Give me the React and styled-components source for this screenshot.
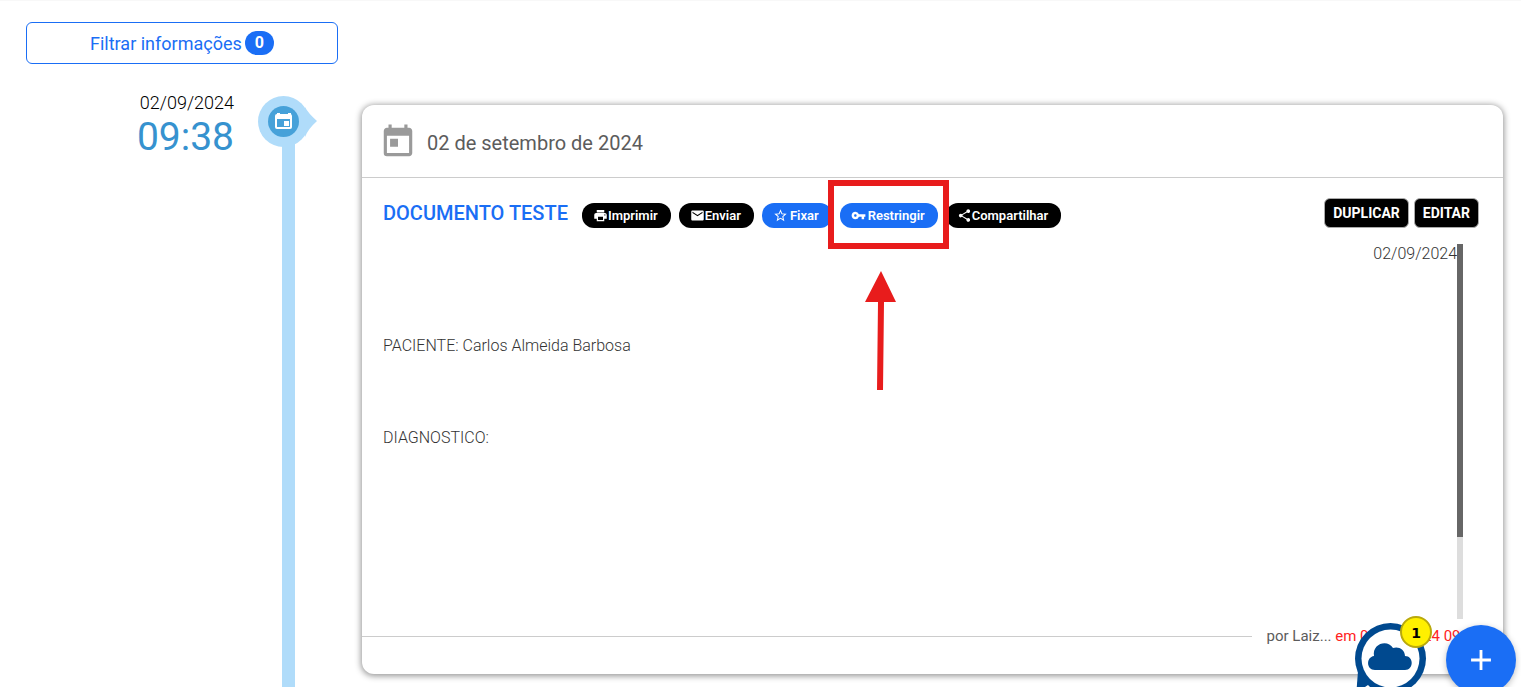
import React from 'react';
import styled, { createGlobalStyle } from 'styled-components';
import { MdAdd, MdEmail, MdPrint, MdShare, MdStarBorder, MdToday, MdVpnKey } from 'react-icons/md';

function App() {
    return (
        <>
            <GlobalStyle />
            <PageStyled>
                <FilterButton type="button">
                    Filtrar informações <FilterCount>0</FilterCount>
                </FilterButton>

                <TimelineEntry>
                    <EntryTime>
                        <EntryDate>02/09/2024</EntryDate>
                        <EntryHour>09:38</EntryHour>
                    </EntryTime>

                    <Track>
                        <MarkerIcon />
                        <TrackLine />
                    </Track>

                    <Card>
                        <CardHeader>
                            <MdToday size={38} color="#9a9a9a" />
                            <h2>02 de setembro de 2024</h2>
                        </CardHeader>

                        <Toolbar>
                            <DocTitle>DOCUMENTO TESTE</DocTitle>
                            <PillGroup>
                                <Pill type="button"><MdPrint />Imprimir</Pill>
                                <Pill type="button"><MdEmail />Enviar</Pill>
                                <Pill type="button" $primary $spaced><MdStarBorder />Fixar</Pill>
                                <Highlight>
                                    <Pill type="button" $primary $spaced><MdVpnKey />Restringir</Pill>
                                    <HighlightBox />
                                    <HighlightArrow />
                                </Highlight>
                                <Pill type="button"><MdShare />Compartilhar</Pill>
                            </PillGroup>
                            <Actions>
                                <ActionButton type="button">DUPLICAR</ActionButton>
                                <ActionButton type="button">EDITAR</ActionButton>
                            </Actions>
                        </Toolbar>

                        <DocBody>
                            <DocText>
                                <p className="date">02/09/2024</p>
                                <p>PACIENTE: Carlos Almeida Barbosa</p>
                                <p>DIAGNOSTICO:</p>
                            </DocText>
                            <ScrollTrack>
                                <ScrollThumb />
                            </ScrollTrack>
                        </DocBody>

                        <CardFooter>
                            <FooterLine />
                            <p>por Laiz... <span>em 02/09/2024 09:38</span></p>
                        </CardFooter>
                    </Card>
                </TimelineEntry>

                <ChatButton type="button" aria-label="Chat">
                    <ChatIcon />
                    <ChatBadge>1</ChatBadge>
                </ChatButton>
                <AddButton type="button" aria-label="Adicionar">
                    <MdAdd size={34} />
                </AddButton>
            </PageStyled>
        </>
    );
}

function MarkerIcon() {
    return (
        <MarkerStyled width="59" height="52" viewBox="0 0 59 52">
            <circle cx="25.5" cy="25.5" r="25.5" fill="#b0dcfa" />
            <path d="M47 11 Q50 17 59 25 Q50 33 47 41 Z" fill="#b0dcfa" />
            <circle cx="25.5" cy="25.5" r="15.5" fill="#46a1d9" />
            <path d="M19 17 h3 v3 h-3 z M30 17 h3 v3 h-3 z" fill="#fff" />
            <rect x="17" y="18" width="17" height="15" rx="2" fill="#fff" />
            <rect x="19" y="23" width="13" height="8" fill="#46a1d9" />
            <rect x="26" y="25" width="5" height="5" fill="#fff" />
        </MarkerStyled>
    );
}

function HighlightArrow() {
    return (
        <ArrowStyled width="32" height="120" viewBox="0 0 32 120">
            <path d="M16 1 L31 32 H19 L18 120 H12 L13 32 H0 Z" fill="#e81c1c" />
        </ArrowStyled>
    );
}

function ChatIcon() {
    return (
        <svg width="72" height="80" viewBox="0 0 72 80">
            <path d="M3 48 L1 74 L26 68 Z" fill="#00498f" />
            <circle cx="35.5" cy="35.5" r="35.5" fill="#00498f" />
            <path d="M10 64 L13 62 L17 66 L8 69 Z" fill="#fff" />
            <circle cx="35.5" cy="35.5" r="29" fill="#fff" />
            <path
                d="M20 47 C11 47 11 34 19 33 C17 20 33 16 38 25 C43 23 50 26 50 33 C59 33 59 47 50 47 Z"
                fill="#00498f"
            />
        </svg>
    );
}

const GlobalStyle = createGlobalStyle`
    * {
        box-sizing: border-box;
        margin: 0;
        padding: 0;
    }

    body {
        font-family: Roboto, 'Liberation Sans', sans-serif;
        color: #000;
        background: #fff;
    }

    button {
        font-family: inherit;
        cursor: pointer;
    }
`;

const PageStyled = styled.div`
    display: flex;
    flex-direction: column;
    min-height: 100vh;
    padding: 21px 18px 0 26px;
    border-top: 1px solid #f8f8f8;
`;

const FilterButton = styled.button`
    display: flex;
    align-items: center;
    justify-content: center;
    gap: 3px;
    width: 312px;
    height: 42px;
    border: 1px solid #1a6ef5;
    border-radius: 6px;
    background: #fff;
    color: #1a6ef5;
    font-size: 18px;
`;

const FilterCount = styled.span`
    padding: 0 10px;
    border-radius: 12px;
    background: #1a6ef5;
    color: #fff;
    font-size: 16px;
    font-weight: 700;
    line-height: 24px;
`;

const TimelineEntry = styled.section`
    display: flex;
    flex: 1;
    margin-top: 32px;
`;

const EntryTime = styled.div`
    width: 208px;
    flex-shrink: 0;
    margin-right: 24px;
    text-align: right;
`;

const EntryDate = styled.p`
    font-size: 18px;
    font-weight: 300;
    line-height: 14px;
`;

const EntryHour = styled.p`
    color: #3692cf;
    font-size: 39px;
    line-height: 54px;
`;

const Track = styled.div`
    display: flex;
    flex-direction: column;
    flex-shrink: 0;
    width: 59px;
`;

const TrackLine = styled.div`
    flex: 1;
    width: 13px;
    margin: -4px 0 0 24px;
    background: #b0dcfa;
`;

const MarkerStyled = styled.svg`
    flex-shrink: 0;
`;

const Card = styled.article`
    display: flex;
    flex: 1;
    flex-direction: column;
    min-width: 0;
    margin: 9px 0 13px 45px;
    border-radius: 12px;
    background: #fff;
    box-shadow: 0 1px 6px 1px rgba(0, 0, 0, 0.42);
`;

const CardHeader = styled.header`
    display: flex;
    align-items: center;
    gap: 10px;
    height: 73px;
    padding: 2px 17px 0;
    border-bottom: 1px solid #ccc;

    h2 {
        padding-top: 2px;
        color: #5c5c5c;
        font-size: 20px;
        font-weight: 400;
    }
`;

const Toolbar = styled.div`
    display: flex;
    align-items: center;
    height: 66px;
    padding: 4px 24px 0 21px;
`;

const DocTitle = styled.h3`
    margin-right: 14px;
    color: #1a6ef5;
    font-size: 20px;
    font-weight: 500;
    white-space: nowrap;
`;

const PillGroup = styled.div`
    display: flex;
    gap: 8px;
    padding-top: 4px;
`;

const Pill = styled.button`
    display: flex;
    align-items: center;
    gap: ${({ $spaced }) => ($spaced ? 2 : 0)}px;
    height: 25px;
    padding: 0 13px 0 11px;
    border: none;
    border-radius: 12px;
    background: ${({ $primary }) => ($primary ? '#1a6ef5' : '#000')};
    color: #fff;
    font-size: 13px;
    font-weight: 600;
    white-space: nowrap;

    svg {
        width: 15px;
        height: 15px;
    }
`;

const Highlight = styled.div`
    position: relative;
`;

const HighlightBox = styled.div`
    position: absolute;
    inset: -23px -11px -21px -12px;
    border: 6px solid #e81c1c;
    pointer-events: none;
`;

const ArrowStyled = styled.svg`
    position: absolute;
    top: 67px;
    left: 25px;
`;

const Actions = styled.div`
    display: flex;
    gap: 5px;
    margin-left: auto;
`;

const ActionButton = styled.button`
    height: 30px;
    padding: 0 8px;
    border: 1px solid #aaa;
    border-radius: 6px;
    background: #000;
    color: #fff;
    font-size: 14px;
    font-weight: 700;
`;

const DocBody = styled.div`
    display: flex;
    height: 375px;
    margin: 0 40px 0 21px;
`;

const DocText = styled.div`
    flex: 1;
    color: #333;
    font-size: 16px;
    font-weight: 300;
    line-height: 20px;

    p {
        margin-bottom: 72px;
    }

    .date {
        text-align: right;
    }
`;

const ScrollTrack = styled.div`
    width: 6px;
    background: #ddd;
`;

const ScrollThumb = styled.div`
    height: 78%;
    background: #666;
`;

const CardFooter = styled.footer`
    display: flex;
    align-items: center;
    gap: 15px;
    height: 34px;
    margin-bottom: 21px;
    padding-right: 22px;

    p {
        color: #5c5c5c;
        font-size: 15px;
    }

    span {
        color: #f22;
    }
`;

const FooterLine = styled.div`
    flex: 1;
    height: 1px;
    background: #ccc;
`;

const ChatButton = styled.button`
    position: fixed;
    right: 94px;
    bottom: -16px;
    width: 72px;
    height: 80px;
    border: none;
    background: none;
`;

const ChatBadge = styled.span`
    position: absolute;
    top: -7px;
    right: -5px;
    width: 32px;
    height: 32px;
    border: 2px solid #b9a90c;
    border-radius: 50%;
    background: #fff000;
    color: #000;
    font: 700 14px/30px 'DejaVu Sans', sans-serif;
`;

const AddButton = styled.button`
    position: fixed;
    right: 5px;
    bottom: -8px;
    display: flex;
    align-items: center;
    justify-content: center;
    width: 70px;
    height: 70px;
    border: none;
    border-radius: 50%;
    background: #1a6ef5;
    color: #fff;
    box-shadow: 0 2px 6px rgba(0, 0, 0, 0.25);
`;

export default App;
